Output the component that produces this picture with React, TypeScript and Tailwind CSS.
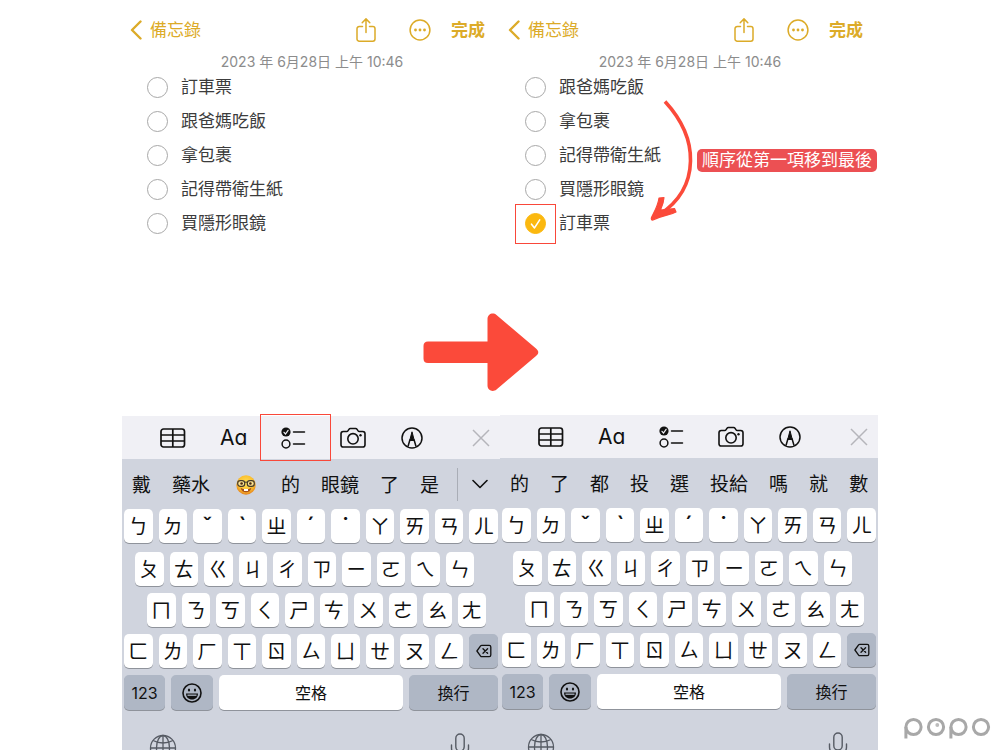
import React from 'react';
import clsx from 'clsx';

interface NoteItem {
  text: string;
  done?: boolean;
}

interface PhoneProps {
  id: string;
  items: NoteItem[];
  suggestions: string[];
  expandable?: boolean;
}

const KEY_ROWS = [
  { keys: 'ㄅㄉˇˋㄓˊ˙ㄚㄞㄢㄦ', className: 'pl-0.5 pr-0.5' },
  { keys: 'ㄆㄊㄍㄐㄔㄗㄧㄛㄟㄣ', className: 'mt-[9px] pl-[13px] pr-[26px]' },
  { keys: 'ㄇㄋㄎㄑㄕㄘㄨㄜㄠㄤ', className: 'mt-[7px] pl-[25px] pr-[14px]' },
  { keys: 'ㄈㄌㄏㄒㄖㄙㄩㄝㄡㄥ⌫', className: 'mt-[7px] pl-0.5 pr-0.5' },
];

const TONES = 'ˇˋˊ˙';

const ShareIcon = () => (
  <svg viewBox="0 0 22 26" className="w-[22px] h-[26px]" fill="none" stroke="currentColor" strokeWidth="1.5" strokeLinecap="round" strokeLinejoin="round">
    <path d="M7.5 9.5H4.2A2.2 2.2 0 0 0 2 11.700V22a2.200 2.200 0 0 0 2.200 2.200h13.600A2.200 2.200 0 0 0 20 22V11.700a2.200 2.200 0 0 0-2.200-2.200h-3.300" />
    <path d="M11 15.500V2M7.200 5.700 11 1.900l3.800 3.800" />
  </svg>
);

const MoreIcon = () => (
  <svg viewBox="0 0 22 22" className="size-[22px]">
    <circle cx="11" cy="11" r="9.900" fill="none" stroke="currentColor" strokeWidth="1.5" />
    <circle cx="6.500" cy="11" r="1.400" fill="currentColor" />
    <circle cx="11" cy="11" r="1.400" fill="currentColor" />
    <circle cx="15.500" cy="11" r="1.400" fill="currentColor" />
  </svg>
);

const TableIcon = () => (
  <svg viewBox="0 0 26 22" className="w-[26px] h-[22px]" fill="none" stroke="currentColor" strokeWidth="1.700">
    <rect x="1" y="2" width="23.500" height="18" rx="2.500" />
    <path d="M1 8h23.500M1 14h23.500M12.800 2v18" />
  </svg>
);

const ChecklistIcon = () => (
  <svg viewBox="0 0 26 22" className="w-[26px] h-[22px]" fill="none" stroke="currentColor" strokeWidth="1.500" strokeLinecap="round">
    <circle cx="6" cy="5" r="4.600" fill="currentColor" stroke="none" />
    <path d="m4 5.300 1.500 1.700 2.600-3.700" stroke="#f0f0f5" strokeWidth="1.200" />
    <circle cx="6" cy="17" r="3.900" />
    <path d="M13.500 5h11M13.500 17h11" />
  </svg>
);

const CameraIcon = () => (
  <svg viewBox="0 0 26 22" className="w-[26px] h-[22px]" fill="none" stroke="currentColor" strokeWidth="1.600" strokeLinejoin="round">
    <path d="M3.300 4.500h3.400c.7 0 1-.3 1.400-.9l.8-1.200c.4-.6.8-.9 1.500-.9h5.200c.7 0 1.100.3 1.500.9l.8 1.200c.4.600.7.900 1.400.9h3.400c1.400 0 2.300.9 2.300 2.300v10.900c0 1.400-.9 2.300-2.300 2.300H3.300C1.900 20 1 19.100 1 17.700V6.800c0-1.400.9-2.300 2.300-2.300Z" />
    <circle cx="13" cy="11.800" r="5.200" />
    <circle cx="20.500" cy="8.200" r="1.200" fill="currentColor" stroke="none" />
  </svg>
);

const MarkupIcon = () => (
  <svg viewBox="0 0 26 22" className="w-[26px] h-[22px]" fill="none" stroke="currentColor" strokeWidth="1.500" strokeLinejoin="round">
    <circle cx="12" cy="11" r="10" />
    <path d="M8 19.500 10 12.500M16 19.500 14 12.500" />
    <path d="M12 4.800 9.700 13.500h4.600Z" fill="currentColor" strokeWidth="1" />
  </svg>
);

const NerdIcon = () => (
  <svg viewBox="0 0 20 20" className="size-5">
    <defs>
      <radialGradient id="nerdFace" cx="50%" cy="40%" r="60%">
        <stop offset="0" stopColor="#ffe25a" />
        <stop offset="0.650" stopColor="#fbc02f" />
        <stop offset="1" stopColor="#e5811c" />
      </radialGradient>
    </defs>
    <circle cx="10" cy="10" r="9.700" fill="url(#nerdFace)" />
    <g fill="#fdf3c8" fillOpacity="0.600" stroke="#453b2b" strokeWidth="1.200">
      <rect x="1.700" y="5.600" width="7" height="5.800" rx="2.600" />
      <rect x="11.300" y="5.600" width="7" height="5.800" rx="2.600" />
      <path d="M8.500 7.500q1.500-1 3 0" fill="none" />
    </g>
    <circle cx="5.600" cy="8.500" r="1.300" fill="#4a2b12" />
    <circle cx="14.400" cy="8.500" r="1.300" fill="#4a2b12" />
    <path d="M4.500 12.800q5.500 3 11 0-1.300 4.500-5.500 4.500t-5.500-4.500Z" fill="#a5501c" />
    <path d="M8 14h4v2H8Z" fill="#fff" />
  </svg>
);

const SmileIcon = () => (
  <svg viewBox="0 0 20 20" className="size-5" fill="none" stroke="currentColor">
    <circle cx="10" cy="10" r="9" strokeWidth="1.600" />
    <ellipse cx="7" cy="7" rx="1.100" ry="1.500" fill="currentColor" stroke="none" />
    <ellipse cx="13" cy="7" rx="1.100" ry="1.500" fill="currentColor" stroke="none" />
    <path d="M4 10.500h12c0 3.700-2.500 6-6 6s-6-2.300-6-6Z" fill="currentColor" stroke="none" />
    <path d="M5.500 12.200h9" stroke="#afb7c5" strokeWidth="1.300" />
  </svg>
);

const BackspaceIcon = () => (
  <svg viewBox="0 0 16 14" className="w-4 h-3.5" fill="none" stroke="currentColor" strokeWidth="1.300" strokeLinejoin="round" strokeLinecap="round">
    <path d="M5.800 1.300h7.400c1 0 1.600.6 1.600 1.600v8.200c0 1-.6 1.600-1.600 1.600H5.800c-.5 0-.9-.2-1.200-.6L.9 7l3.700-5.100c.3-.4.700-.6 1.200-.6Z" />
    <path d="m7 4.700 4.600 4.600M11.600 4.700 7 9.300" />
  </svg>
);

const GlobeIcon = () => (
  <svg viewBox="0 0 28 28" className="size-7" fill="none" stroke="currentColor" strokeWidth="1.300">
    <circle cx="14" cy="14" r="12.500" />
    <ellipse cx="14" cy="14" rx="6.500" ry="12.500" />
    <path d="M14 1.500v25M1.500 14h25M4 6.500q10 5 20 0M4 21.500q10-5 20 0" />
  </svg>
);

const MicIcon = () => (
  <svg viewBox="0 0 20 28" className="w-5 h-7" fill="none" stroke="currentColor" strokeWidth="1.400" strokeLinecap="round">
    <rect x="5.800" y="1" width="8.400" height="17" rx="4.200" />
    <path d="M1.500 12v3q0 7 8.500 7t8.500-7v-3M10 22v4M6 26h8" />
  </svg>
);

const Phone: React.FC<PhoneProps> = ({ id, items, suggestions, expandable = false }) => (
  <section className="flex flex-col min-h-0 overflow-hidden">
    <header className="flex items-center h-[60px] pl-2 pr-[15px] text-[17px] leading-none text-[#dcab28] shrink-0">
      <button type="button" className="flex items-center gap-2">
        <svg viewBox="0 0 12 20" className="w-3 h-5" fill="none" stroke="currentColor" strokeWidth="2.400" strokeLinecap="round" strokeLinejoin="round">
          <path d="M10.500 1.500 2 10l8.500 8.500" />
        </svg>
        備忘錄
      </button>
      <button type="button" aria-label="分享" className="ml-auto"><ShareIcon /></button>
      <button type="button" aria-label="更多" className="ml-8"><MoreIcon /></button>
      <button type="button" className="ml-5 font-bold">完成</button>
    </header>
    <p className="-mt-1.5 h-4 pl-0.5 flex items-center justify-center text-sm leading-none text-[#8c8c8c] whitespace-nowrap">
      2023 年 6月28日 上午 10:46
    </p>

    <ul className="flex-1 min-h-0">
      {items.map((item, i) => (
        <li key={item.text} className="flex items-center h-[34px] pl-[25px]">
          <span className="relative flex">
            <input
              id={`${id}-${i}`}
              type="checkbox"
              defaultChecked={item.done}
              className="peer appearance-none size-[21px] rounded-full border border-[#a8a8a8] checked:border-[#fbb80f] checked:bg-[#fbb80f]"
            />
            <svg viewBox="0 0 21 21" className="absolute inset-0 hidden peer-checked:block pointer-events-none" fill="none" stroke="#fff" strokeWidth="1.600" strokeLinecap="round" strokeLinejoin="round">
              <path d="m6.500 11.200 3 3.700 5.200-8" />
            </svg>
          </span>
          <label htmlFor={`${id}-${i}`} className="pl-[13px] text-[17px] leading-none text-[#3c3c3c]">{item.text}</label>
        </li>
      ))}
    </ul>

    <div className="flex items-center h-[43px] pl-[38px] pr-2.5 gap-[34px] bg-[#f0f0f5] text-[#111] shrink-0">
      <button type="button" aria-label="表格"><TableIcon /></button>
      <button type="button" className="w-[26px] text-[21px] leading-none [font-feature-settings:'cv11']">Aa</button>
      <button type="button" aria-label="核對清單"><ChecklistIcon /></button>
      <button type="button" aria-label="相機"><CameraIcon /></button>
      <button type="button" aria-label="標示"><MarkupIcon /></button>
      <button type="button" aria-label="關閉" className="ml-auto text-[#b5b5bb]">
        <svg viewBox="0 0 18 18" className="size-[18px]" fill="none" stroke="currentColor" strokeWidth="1.500">
          <path d="m1 1 16 16M17 1 1 17" />
        </svg>
      </button>
    </div>

    <div className="bg-[#d0d4de] text-[#111] shrink-0">
      <div className="flex items-center h-[50px] pl-2.5">
        <div className="flex items-center gap-[21px] pt-0.5 text-[19px] leading-none whitespace-nowrap">
          {suggestions.map((word) => (
            <button type="button" key={word} aria-label={word}>
              {word === '🤓' ? <span className="flex justify-center w-[29px]"><NerdIcon /></span> : word}
            </button>
          ))}
        </div>
        {expandable && (
          <button type="button" aria-label="展開" className="ml-auto mr-1 h-[33px] pl-3.5 pr-2 border-l border-[#a9adb6]">
            <svg viewBox="0 0 16 10" className="w-4 h-2.5" fill="none" stroke="currentColor" strokeWidth="1.600" strokeLinecap="round" strokeLinejoin="round">
              <path d="m1 1.500 7 7 7-7" />
            </svg>
          </button>
        )}
      </div>

      {KEY_ROWS.map((row) => (
        <div key={row.keys} className={clsx('flex gap-1.5', row.className)}>
          {Array.from(row.keys).map((key) => (
            <button
              type="button"
              key={key}
              aria-label={key}
              className={clsx(
                'flex flex-1 min-w-0 items-center justify-center h-[34px] rounded-[5px] leading-none shadow-[0_1px_0_#8f939b]',
                key === '⌫' ? 'bg-[#afb7c5]' : 'bg-white pt-0.5',
                TONES.includes(key) ? 'text-2xl font-medium' : 'text-xl'
              )}
            >
              {key === '⌫' ? <BackspaceIcon /> : key}
            </button>
          ))}
        </div>
      ))}

      <div className="flex gap-1.5 mt-[7px] px-0.5 text-base leading-none">
        <button type="button" className="w-[41px] h-[35px] rounded-[5px] bg-[#afb7c5] shadow-[0_1px_0_#8f939b]">123</button>
        <button type="button" aria-label="表情符號" className="flex items-center justify-center w-[42px] h-[35px] rounded-[5px] bg-[#afb7c5] shadow-[0_1px_0_#8f939b]">
          <SmileIcon />
        </button>
        <button type="button" className="flex-1 h-[35px] rounded-[5px] bg-white shadow-[0_1px_0_#8f939b]">空格</button>
        <button type="button" className="w-[89px] h-[35px] rounded-[5px] bg-[#afb7c5] shadow-[0_1px_0_#8f939b]">換行</button>
      </div>

      <div className={clsx('flex items-start justify-between pl-[27px] pr-[30px] overflow-hidden text-[#565b64]', expandable ? 'h-10' : 'h-[41px]')}>
        <button type="button" aria-label="切換鍵盤" className="mt-6"><GlobeIcon /></button>
        <button type="button" aria-label="聽寫" className="mt-[23px]"><MicIcon /></button>
      </div>
    </div>
  </section>
);

const BEFORE: NoteItem[] = [
  { text: '訂車票' },
  { text: '跟爸媽吃飯' },
  { text: '拿包裹' },
  { text: '記得帶衛生紙' },
  { text: '買隱形眼鏡' },
];

const AFTER: NoteItem[] = [...BEFORE.slice(1), { text: '訂車票', done: true }];

export default function App() {
  return (
    <main
      lang="zh-Hant-TW"
      className="relative h-screen overflow-hidden bg-white font-[Inter,'Noto_Sans_CJK_TC',sans-serif]"
    >
      <div className="grid grid-cols-2 h-full mx-[122px]">
        <Phone id="before" items={BEFORE} suggestions={['戴', '藥水', '🤓', '的', '眼鏡', '了', '是']} expandable />
        <Phone id="after" items={AFTER} suggestions={['的', '了', '都', '投', '選', '投給', '嗎', '就', '數']} />
      </div>

      {/* Annotations */}
      <div className="absolute left-[260px] top-[414px] w-[71px] h-[47px] border border-[#f9483a] pointer-events-none" />
      <div className="absolute left-[515px] top-[204px] w-[41px] h-10 border border-[#f9483a] pointer-events-none" />
      <svg viewBox="0 0 46 126" className="absolute left-[648px] top-[98px] w-[46px] h-[126px] pointer-events-none" fill="#fb4a3a" stroke="#fb4a3a" strokeLinejoin="round">
        <path d="M17 3.500C34 22 43 42 42.500 63 42 86 31 104 11 117" fill="none" strokeWidth="3.600" />
        <path d="M11 100l5-.5c-.3 5-1.700 8.500-3.500 12.500l14-1.500 1.500 3.500c-7 3.500-14 3.500-23 8-1.500.5-2-1-1.500-2.500C6 114 10 108 11 100Z" strokeWidth="1.200" />
      </svg>
      <p className="absolute left-[697px] top-[149px] h-[23px] px-[5px] flex items-center rounded-[5px] bg-[#ec5053] text-[17px] leading-none text-white whitespace-nowrap">
        順序從第一項移到最後
      </p>
      <svg viewBox="0 0 116 80" className="absolute left-[423px] top-[312px] w-[116px] h-20 pointer-events-none" fill="#fb4a3a">
        <path d="M5 29.500h59.500V7c0-5 5.500-7 9-4l39.500 33.500c3 2.500 3 5 0 7.500L73.500 77.500c-3.500 3-9 1-9-4V51H5c-3 0-4.500-1.500-4.500-4.500V34c0-3 1.500-4.500 4.500-4.500Z" />
      </svg>
      <svg role="img" aria-label="popo" viewBox="0 0 88 24" className="absolute right-[9px] bottom-[9px] w-[88px] h-6" fill="none" stroke="#a8a8a8" strokeWidth="3">
        <circle cx="10.500" cy="10" r="7.600" />
        <path d="M2.900 10v11.500" />
        <circle cx="33" cy="10" r="7.600" />
        <circle cx="34.300" cy="8" r="1.900" fill="#bcbcbc" stroke="none" />
        <circle cx="55.500" cy="10" r="7.600" />
        <path d="M47.900 10v11.500" />
        <circle cx="78" cy="10" r="7.600" />
      </svg>
    </main>
  );
}
